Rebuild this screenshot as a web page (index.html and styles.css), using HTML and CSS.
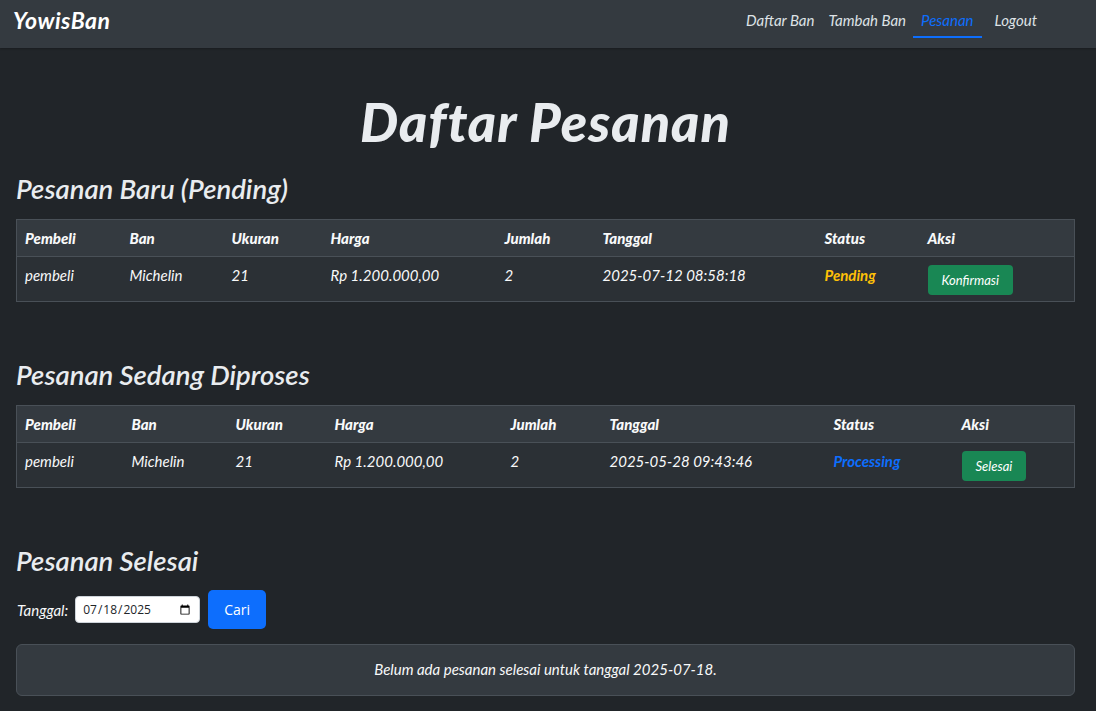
FILE: index.html
```html
<!DOCTYPE html>
<html lang="id">
<head>
<meta charset="utf-8">
<title>Daftar Pesanan - YowisBan</title>
<link rel="stylesheet" href="styles.css">
</head>
<body>
<nav class="navbar">
  <a class="brand" href="#">YowisBan</a>
  <ul class="nav-links">
    <li><a href="#">Daftar Ban</a></li>
    <li><a href="#">Tambah Ban</a></li>
    <li><a class="active" href="#">Pesanan</a></li>
    <li><a href="#">Logout</a></li>
  </ul>
</nav>
<main class="container">
  <h1 class="page-title">Daftar Pesanan</h1>

  <h2 class="section-title">Pesanan Baru (Pending)</h2>
  <table class="orders orders-pending">
    <thead>
      <tr><th>Pembeli</th><th>Ban</th><th>Ukuran</th><th>Harga</th><th>Jumlah</th><th>Tanggal</th><th>Status</th><th>Aksi</th></tr>
    </thead>
    <tbody>
      <tr>
        <td>pembeli</td><td>Michelin</td><td>21</td><td>Rp 1.200.000,00</td><td>2</td><td>2025-07-12 08:58:18</td>
        <td class="status pending">Pending</td>
        <td><button class="btn-success">Konfirmasi</button></td>
      </tr>
    </tbody>
  </table>

  <h2 class="section-title spaced">Pesanan Sedang Diproses</h2>
  <table class="orders orders-process">
    <thead>
      <tr><th>Pembeli</th><th>Ban</th><th>Ukuran</th><th>Harga</th><th>Jumlah</th><th>Tanggal</th><th>Status</th><th>Aksi</th></tr>
    </thead>
    <tbody>
      <tr>
        <td>pembeli</td><td>Michelin</td><td>21</td><td>Rp 1.200.000,00</td><td>2</td><td>2025-05-28 09:43:46</td>
        <td class="status processing">Processing</td>
        <td><button class="btn-success">Selesai</button></td>
      </tr>
    </tbody>
  </table>

  <h2 class="section-title spaced">Pesanan Selesai</h2>
  <form class="filter">
    <label for="tgl">Tanggal:</label>
    <input id="tgl" type="date" value="2025-07-18">
    <button type="button" class="btn-primary">Cari</button>
  </form>
  <div class="empty-box">Belum ada pesanan selesai untuk tanggal 2025-07-18.</div>
</main>
</body>
</html>
```

FILE: styles.css
```css
* { box-sizing: border-box; }
html, body {
  margin: 0;
  background: #212529;
  color: #dee2e6;
  font-family: "Lato", "Open Sans", sans-serif;
  font-style: italic;
}
a { text-decoration: none; }

.navbar {
  height: 48px;
  background: #343a40;
  display: flex;
  align-items: flex-start;
  justify-content: space-between;
  padding: 10px 52px 0 13px;
  box-shadow: 0 1px 2px rgba(0,0,0,0.25);
}
.brand {
  color: #ffffff;
  font-weight: 700;
  font-size: 23px;
  line-height: 20px;
  letter-spacing: 0.5px;
}
.nav-links {
  list-style: none;
  display: flex;
  align-items: flex-start;
  margin: 0;
  padding: 0;
}
.nav-links a {
  display: block;
  color: #dee2e6;
  font-size: 15px;
  line-height: 20px;
  padding: 0 7px;
}
.nav-links a.active {
  color: #0d6efd;
  padding: 0 8px 6px;
  border-bottom: 2px solid #0d6efd;
  margin-right: 6px;
}

.container {
  padding: 0 21px 24px 16px;
}
.page-title {
  text-align: center;
  font-size: 54px;
  line-height: 62px;
  font-weight: 900;
  letter-spacing: 1px;
  color: #e9ecef;
  margin: 43px 0 19px;
}
.section-title {
  font-size: 27.5px;
  line-height: 34px;
  font-weight: 600;
  color: #e9ecef;
  margin: 0 0 13px;
}
.section-title.spaced { margin-top: 56px; }

.orders {
  width: 100%;
  border-collapse: collapse;
  border: 1px solid #495057;
  font-size: 15px;
}
.orders th, .orders td {
  text-align: left;
  vertical-align: top;
  color: #f8f9fa;
}
.orders thead th {
  background: #343a40;
  font-weight: 900;
  line-height: 20px;
  padding: 8px;
  border-bottom: 1px solid #495057;
}
.orders tbody td {
  background: #2b3035;
  font-weight: 400;
  line-height: 21px;
  padding: 8px 8px 6px;
}
.orders tbody td.status { font-weight: 700; }
.orders tbody td.pending { color: #ffc107; }
.orders tbody td.processing { color: #0d6efd; }

.orders-pending th:nth-child(1) { width: 105px; }
.orders-pending th:nth-child(2) { width: 102px; }
.orders-pending th:nth-child(3) { width: 99px; }
.orders-pending th:nth-child(4) { width: 174px; }
.orders-pending th:nth-child(5) { width: 98px; }
.orders-pending th:nth-child(6) { width: 222px; }
.orders-pending th:nth-child(7) { width: 103px; }

.orders-process th:nth-child(1) { width: 107px; }
.orders-process th:nth-child(2) { width: 104px; }
.orders-process th:nth-child(3) { width: 99px; }
.orders-process th:nth-child(4) { width: 176px; }
.orders-process th:nth-child(5) { width: 99px; }
.orders-process th:nth-child(6) { width: 224px; }
.orders-process th:nth-child(7) { width: 128px; }

.btn-success {
  display: block;
  background: #198754;
  color: #ffffff;
  border: none;
  border-radius: 4px;
  font-family: inherit;
  font-style: italic;
  font-size: 13px;
  height: 30px;
  padding: 0 14px;
  cursor: pointer;
}

.filter {
  display: flex;
  align-items: center;
  margin: -1px 0 15px;
}
.filter label {
  font-size: 15px;
  color: #f8f9fa;
  margin-right: 7px;
  margin-left: 1px;
}
.filter input {
  width: 125px;
  height: 27px;
  border: 1px solid #ced4da;
  border-radius: 4px;
  background: #ffffff;
  color: #212529;
  font-family: "Open Sans", sans-serif;
  font-style: normal;
  font-size: 12px;
  padding: 0 6px;
  margin-right: 8px;
  color-scheme: light;
}
.btn-primary {
  width: 58px;
  height: 39px;
  background: #0d6efd;
  color: #ffffff;
  border: none;
  border-radius: 5px;
  font-family: "Open Sans", sans-serif;
  font-style: normal;
  font-size: 14px;
  cursor: pointer;
}

.empty-box {
  background: #343a40;
  border: 1px solid #495057;
  border-radius: 6px;
  text-align: center;
  font-size: 15px;
  line-height: 21px;
  padding: 14px 16px 15px;
  color: #f8f9fa;
}
```
